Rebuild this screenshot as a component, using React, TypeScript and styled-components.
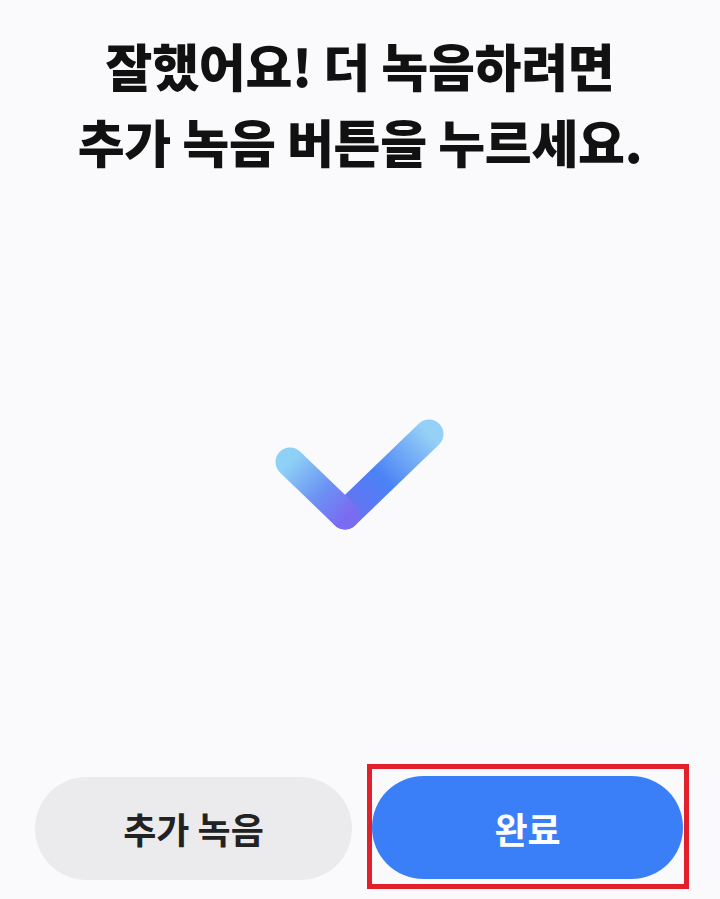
import React from "react";
import styled, { createGlobalStyle } from "styled-components";

const GlobalStyle = createGlobalStyle`
  html, body {
    margin: 0;
    padding: 0;
    background: #fafafc;
  }
  body {
    font-family: "Noto Sans CJK KR", "Noto Sans", sans-serif;
  }
`;

const Screen = styled.div`
  display: flex;
  flex-direction: column;
  height: 899px;
  background: #fafafc;
`;

const Title = styled.h1`
  margin: 0;
  padding-top: 27px;
  font-size: 51px;
  font-weight: 800;
  line-height: 76px;
  letter-spacing: -0.3px;
  color: #111;
  text-align: center;
`;

const Stage = styled.div`
  flex: 1;
  display: flex;
  align-items: center;
  justify-content: center;
  padding-top: 10px;
`;

const Footer = styled.div`
  display: grid;
  grid-template-columns: 317fr 322fr;
  gap: 15px;
  align-items: center;
  padding: 0 31px 10px 35px;
`;

const Button = styled.button<{ $primary?: boolean }>`
  display: flex;
  align-items: center;
  justify-content: center;
  width: 100%;
  height: 103px;
  border: none;
  border-radius: 52px;
  background: ${(p) => (p.$primary ? "#3b7ff8" : "#ebebed")};
  color: ${(p) => (p.$primary ? "#ffffff" : "#222222")};
  font-family: inherit;
  font-size: 36px;
  font-weight: 700;
  cursor: pointer;
`;

const SecondaryButton = styled(Button)`
  margin-top: 3px;
`;

const Highlight = styled.div`
  border: 5px solid #e2202b;
  padding: 7px 1px 5px 0;
`;

const CheckMark = () => (
  <svg width="200" height="150" viewBox="260 400 200 150">
    <defs>
      <linearGradient id="leftArm" gradientUnits="userSpaceOnUse" x1="290" y1="460" x2="345" y2="515">
        <stop offset="0" stopColor="#8fd0f6" />
        <stop offset="0.55" stopColor="#6b93f3" />
        <stop offset="1" stopColor="#7a6cf1" />
      </linearGradient>
      <linearGradient id="rightArm" gradientUnits="userSpaceOnUse" x1="345" y1="513" x2="429" y2="432">
        <stop offset="0" stopColor="#6b70f2" />
        <stop offset="0.45" stopColor="#4b82f6" />
        <stop offset="1" stopColor="#95d0f6" />
      </linearGradient>
    </defs>
    <path d="M345 513 L429 432" stroke="url(#rightArm)" strokeWidth="29" strokeLinecap="round" fill="none" />
    <path d="M290 460 L345 513" stroke="url(#leftArm)" strokeWidth="29" strokeLinecap="round" fill="none" />
  </svg>
);

export default function App() {
  return (
    <>
      <GlobalStyle />
      <Screen>
        <Title>
          잘했어요! 더 녹음하려면
          <br />
          추가 녹음 버튼을 누르세요.
        </Title>
        <Stage>
          <CheckMark />
        </Stage>
        <Footer>
          <SecondaryButton>추가 녹음</SecondaryButton>
          <Highlight>
            <Button $primary>완료</Button>
          </Highlight>
        </Footer>
      </Screen>
    </>
  );
}
